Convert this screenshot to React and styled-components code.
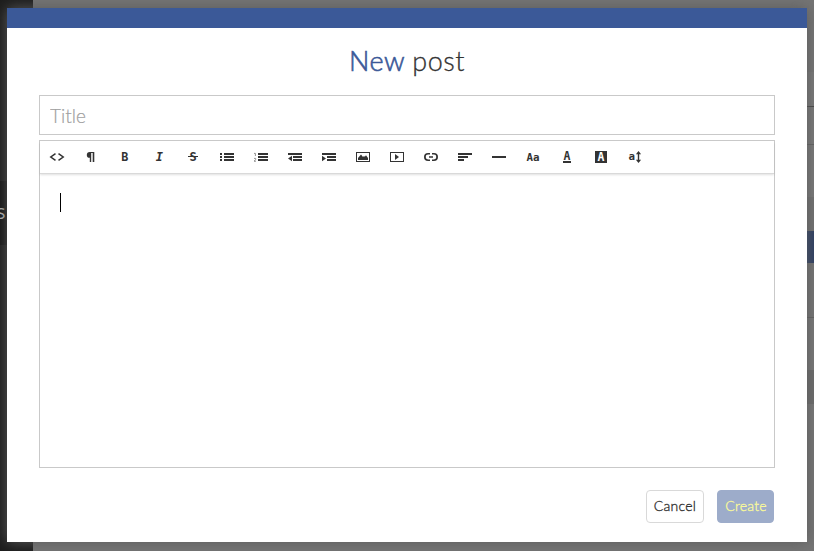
import React from "react";
import styled, { createGlobalStyle } from "styled-components";

const GlobalStyle = createGlobalStyle`
  * { box-sizing: border-box; }
  html, body { margin: 0; height: 100%; overflow: hidden; }
  body { font-family: Lato, sans-serif; color: #333; }
`;

const Screen = styled.div`
  position: relative;
  width: 814px;
  height: 551px;
  padding: 8px 7px 9px;
  background: #757575;
  overflow: hidden;
`;

const Backdrop = styled.div`
  position: absolute;
  inset: 0;
  display: flex;
  justify-content: space-between;
`;

const Sidebar = styled.div`
  width: 33px;
  padding-top: 181px;
  background: #1c1c1c;
`;

const SidebarItem = styled.div`
  height: 64px;
  line-height: 62px;
  background: #101010;
  color: #bbb;
  font-family: "Open Sans", sans-serif;
  font-size: 20px;
  text-indent: -4px;
`;

const PageEdge = styled.div`
  width: 20px;
`;

const Band = styled.div`
  height: ${(p) => p.$h}px;
  background: ${(p) => p.$bg || "transparent"};
`;

const Dialog = styled.section`
  position: relative;
  display: flex;
  flex-direction: column;
  width: 800px;
  height: 534px;
  border-top: 20px solid #3b5998;
  background: #fff;
  box-shadow: 0 0 14px #5c5c5c;
  padding: 0 32px 19px;
`;

const Heading = styled.h1`
  margin: 0;
  height: 67px;
  padding-top: 16px;
  line-height: 34px;
  font-size: 27px;
  font-weight: 300;
  text-align: center;
  letter-spacing: 0.5px;
  -webkit-text-stroke: 0.3px currentColor;
`;

const Accent = styled.span`
  color: #3b5998;
  -webkit-text-stroke: 0.6px currentColor;
`;

const TitleInput = styled.input`
  flex: none;
  width: 736px;
  height: 40px;
  padding: 1px 10px 0;
  border: 1px solid #c9c9c9;
  border-radius: 0;
  outline: none;
  font: 300 19px Lato, sans-serif;
  &::placeholder { color: #a0a0a0; opacity: 1; -webkit-text-stroke: 0.2px #a0a0a0; }
`;

const Editor = styled.div`
  flex: none;
  width: 736px;
  height: 328px;
  margin-top: 5px;
  border: 1px solid #c9c9c9;
`;

const Toolbar = styled.div`
  display: flex;
  height: 32px;
  box-shadow: 0 1px 0 #d9d9d9, 0 2px 2px rgba(0, 0, 0, 0.12);
`;

const Tool = styled.button`
  width: 34px;
  height: 32px;
  padding: 0;
  border: 0;
  background: none;
  svg { display: block; }
`;

const Glyph = styled.text`
  font-family: "DejaVu Sans Mono", monospace;
  font-size: ${(p) => p.$size || 12}px;
  font-weight: 700;
  font-style: ${(p) => (p.$italic ? "italic" : "normal")};
  text-anchor: middle;
  fill: ${(p) => p.$fill || "#333"};
`;

const Writing = styled.div`
  padding: 20px;
`;

const Caret = styled.div`
  width: 1px;
  height: 19px;
  background: #000;
`;

const Footer = styled.footer`
  display: flex;
  justify-content: flex-end;
  gap: 13px;
  margin-top: 22px;
  padding-right: 1px;
`;

const Button = styled.button`
  width: ${(p) => (p.$primary ? 57 : 58)}px;
  height: 33px;
  padding: 0 0 2px;
  border: 1px solid ${(p) => (p.$primary ? "#9dacca" : "#d9d9d9")};
  border-radius: 4px;
  background: ${(p) => (p.$primary ? "#9dacca" : "#fff")};
  color: ${(p) => (p.$primary ? "#f8f89a" : "#333")};
  font: 300 14px Lato, sans-serif;
  -webkit-text-stroke: 0.35px currentColor;
  letter-spacing: 0.25px;
  text-indent: ${(p) => (p.$primary ? 1 : 0)}px;
  white-space: nowrap;
`;

const stroke = { fill: "none", stroke: "#333" };
const bars = (x, w) => [12, 15, 18].map((y) => <rect key={y} x={x} y={y} width={w} height="2" />);

/* Every icon is drawn in a 34 x 32 box, one box per toolbar button. */
const icons = [
  ["Code", <path key="c" {...stroke} strokeWidth="1.5" d="M15.5 12.7 10.8 16l4.7 3.3M18.5 12.7l4.7 3.3-4.7 3.3" />],
  ["Paragraph", <path key="p" d="M20.300 11h-4.500q-3 0-3 2.900t3 2.900V21h1.400v-9h1.500v9h1.600z" />],
  ["Bold", <Glyph key="b" x="16.7" y="20" $size={11.8}>B</Glyph>],
  ["Italic", <Glyph key="i" x="17.3" y="20" $italic>I</Glyph>],
  ["Strikethrough", <><Glyph x="17" y="20">S</Glyph><rect x="12" y="15" width="10" height="1" /></>],
  ["Bulleted list", <>{bars(14, 10)}{[12, 15, 18].map((y) => <rect key={y} x="10" y={y} width="2" height="2" />)}</>],
  ["Numbered list", <>{bars(14, 10)}<path {...stroke} stroke="#777" strokeWidth=".8" d="M10 12.4h1.4V15M10 17.4h1.7v1.2L10 20.2h2" /></>],
  ["Outdent", <><path d="M10 12h14v2H10zM15 15h9v2h-9zM15 18h9v2h-9zM14 14.8v5.4l-4-2.7z" /></>],
  ["Indent", <><path d="M10 12h14v2H10zM15 15h9v2h-9zM15 18h9v2h-9zM10 14.8v5.4l4-2.7z" /></>],
  ["Image", <><rect {...stroke} x="10.5" y="11.5" width="13" height="9" /><path d="M12 19v-2l3-3.5 2 2.5 1-1 .8.8 1.2-1.6 2 2.8v2z" /></>],
  ["Video", <><rect {...stroke} x="10.5" y="11.5" width="13" height="9" /><path d="M15 13v6l4-3z" /></>],
  ["Link", <path key="l" {...stroke} strokeWidth="1.7" d="M16 12.75h-1.9a3.25 3.25 0 0 0 0 6.5H16M18 12.75h1.9a3.25 3.25 0 0 1 0 6.5H18M15 16h4" />],
  ["Align", <path key="a" d="M10 12h14v2H10zM10 15h10v2H10zM10 18h6v2h-6z" />],
  ["Rule", <rect key="r" x="10" y="15" width="14" height="2" />],
  ["Font family", <Glyph key="f" x="17" y="20" $size={10.8}>Aa</Glyph>],
  ["Font color", <><Glyph x="17" y="19" $size={11.5}>A</Glyph><rect x="13" y="20" width="8" height="2" /></>],
  ["Background color", <><rect x="11" y="10" width="12" height="12" /><Glyph x="17" y="20" $size={11.5} $fill="#fff">A</Glyph></>],
  ["Font size", <><Glyph x="13.7" y="19" $size={10.8}>a</Glyph><path d="M20.5 10l2.6 3.2h-1.900v5.600h1.900l-2.600 3.200-2.600-3.200h1.900v-5.600h-1.900z" /></>],
];

export default function App() {
  return (
    <>
      <GlobalStyle />
      <Screen>
        <Backdrop>
          <Sidebar><SidebarItem>s</SidebarItem></Sidebar>
          <PageEdge>
            <Band $h={72} />
            <Band $h={34} $bg="#7a7a7a" />
            <Band $h={1} $bg="#444" />
            <Band $h={37} $bg="#7a7a7a" />
            <Band $h={1} $bg="#626262" />
            <Band $h={52} $bg="#7a7a7a" />
            <Band $h={34} $bg="#727272" />
            <Band $h={32} $bg="#2b3d63" />
            <Band $h={54} $bg="#757575" />
            <Band $h={1} $bg="#606060" />
            <Band $h={52} $bg="#797979" />
            <Band $h={34} $bg="#6c6c6c" />
            <Band $h={26} $bg="#797979" />
          </PageEdge>
        </Backdrop>
        <Dialog>
          <Heading><Accent>New</Accent> post</Heading>
          <TitleInput placeholder="Title" />
          <Editor>
            <Toolbar>
              {icons.map(([label, drawing]) => (
                <Tool key={label} aria-label={label}>
                  <svg width="34" height="32" viewBox="0 0 34 32" fill="#333">{drawing}</svg>
                </Tool>
              ))}
            </Toolbar>
            <Writing><Caret /></Writing>
          </Editor>
          <Footer>
            <Button>Cancel</Button>
            <Button $primary>Create</Button>
          </Footer>
        </Dialog>
      </Screen>
    </>
  );
}
